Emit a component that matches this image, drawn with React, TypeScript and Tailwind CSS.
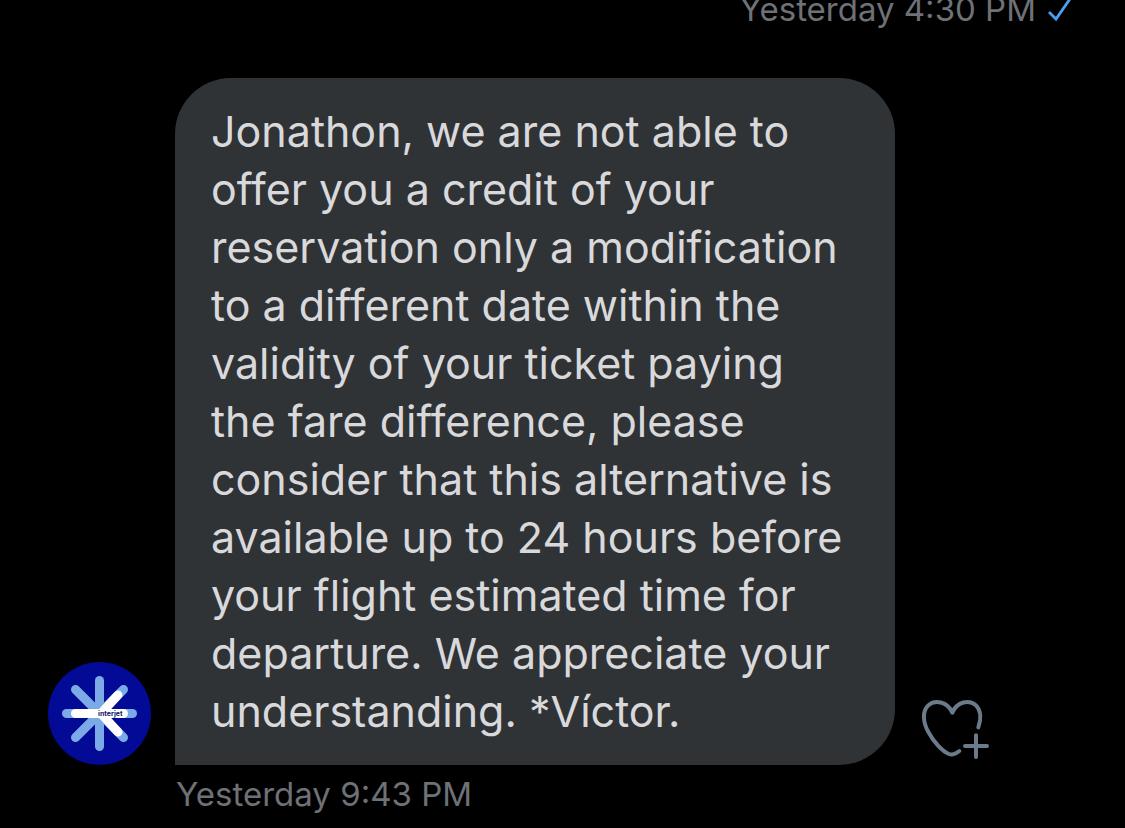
import React from "react";

const CheckIcon = () => {
  return (
    <svg
      viewBox="0 0 26 28"
      className="h-7 w-[26px]"
      fill="none"
      stroke="#4a9ff0"
      strokeWidth="2.8"
      aria-label="Sent"
    >
      <path d="M1 17 8 24 24 1" />
    </svg>
  );
};

const InterjetAvatar = () => {
  return (
    <svg viewBox="0 0 103 103" className="size-[103px]" aria-label="Interjet">
      <circle cx="51.5" cy="51.5" r="51.5" fill="#020a96" />
      <g stroke="#7baae6" strokeWidth="9" strokeLinecap="round">
        <path d="M51.5 18.5v66" />
        <path d="M18.5 51.5h66" />
        <path d="m27.5 27.5 48 48" />
        <path d="m75.5 27.5-48 48" />
      </g>
      <g
        fill="none"
        stroke="#fff"
        strokeWidth="9"
        strokeLinecap="round"
        strokeLinejoin="round"
      >
        <path d="M27.5 51.5h48" />
        <path d="M70 33 53 51.5 70 70" />
      </g>
      <text
        x="50"
        y="54"
        fontSize="7"
        fontWeight="700"
        fill="#0b1470"
        className="font-['Inter',sans-serif]"
      >
        interjet
      </text>
    </svg>
  );
};

const HeartPlusIcon = () => {
  return (
    <svg
      viewBox="27 36 210 189"
      className="h-[63px] w-[70px]"
      fill="none"
      stroke="#6b7b8a"
      strokeWidth="12"
      strokeLinecap="round"
      strokeLinejoin="round"
    >
      <path d="M205 127C214 102 213 76 198 61c-20-19-57-11-71 22C113 50 74 42 54 62c-18 18-15 50 1 79 17 31 42 58 62 66 10 4 18 1 31-9" />
      <path d="M198 151v65M165 183h66" />
    </svg>
  );
};

const App = () => {
  return (
    <main className="min-h-screen overflow-hidden bg-black font-['Inter',sans-serif]">
      <div className="-mt-[11px] flex items-center justify-end gap-3 pr-[51px] text-[33px] leading-10 text-[#6e7176]">
        <time>Yesterday 4:30 PM</time>
        <CheckIcon />
      </div>

      <div className="mt-[49px] flex items-end gap-6 px-12">
        <a href="#profile" className="shrink-0">
          <InterjetAvatar />
        </a>
        <p className="max-w-[720px] rounded-[56px] rounded-bl-none bg-[#303336] pt-6 pr-10 pb-[25px] pl-9 text-[43px] leading-[58px] text-[#d9d9dc]">
          Jonathon, we are not able to offer you a credit of your reservation
          only a modification to a different date within the validity of your
          ticket paying the fare difference, please consider that this
          alternative is available up to 24 hours before your flight estimated
          time for departure. We appreciate your understanding. *Víctor.
        </p>
        <button
          type="button"
          aria-label="Add reaction"
          className="mb-[5px] shrink-0"
        >
          <HeartPlusIcon />
        </button>
      </div>

      <div className="mt-[9px] pl-[176px] text-[33px] leading-10 text-[#6e7176]">
        <time>Yesterday 9:43 PM</time>
      </div>
    </main>
  );
};

export default App;
